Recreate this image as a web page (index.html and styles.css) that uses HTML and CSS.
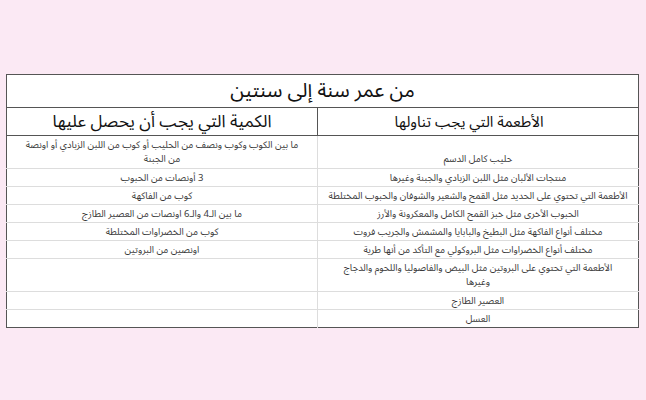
FILE: index.html
```html
<!DOCTYPE html>
<html lang="ar" dir="rtl">
<head>
<meta charset="utf-8">
<link rel="stylesheet" href="styles.css">
</head>
<body>
<table class="diet">
  <colgroup><col class="col-r"><col class="col-l"></colgroup>
  <tr class="title-row"><th colspan="2" class="title">من عمر سنة إلى سنتين</th></tr>
  <tr class="head-row">
    <th class="head head-right">الأطعمة التي يجب تناولها</th>
    <th class="head head-left">الكمية التي يجب أن يحصل عليها</th>
  </tr>
  <tr class="double"><td class="r">حليب كامل الدسم</td><td class="l">ما بين الكوب وكوب ونصف من الحليب أو كوب من اللبن الزبادي أو اونصة<br>من الجبنة</td></tr>
  <tr><td class="r">منتجات الألبان مثل اللبن الزبادي والجبنة وغيرها</td><td class="l">3 أونصات من الحبوب</td></tr>
  <tr><td class="r">الأطعمة التي تحتوي على الحديد مثل القمح والشعير والشوفان والحبوب المختلطة</td><td class="l">كوب من الفاكهة</td></tr>
  <tr><td class="r">الحبوب الأخرى مثل خبز القمح الكامل والمعكرونة والأرز</td><td class="l">ما بين الـ4 والـ6 اونصات من العصير الطازج</td></tr>
  <tr><td class="r">مختلف أنواع الفاكهة مثل البطيخ والبابايا والمشمش والجريب فروت</td><td class="l">كوب من الخضراوات المختلطة</td></tr>
  <tr><td class="r">مختلف أنواع الخضراوات مثل البروكولي مع التأكد من أنها طرية</td><td class="l">اونصين من البروتين</td></tr>
  <tr class="double"><td class="r">الأطعمة التي تحتوي على البروتين مثل البيض والفاصوليا واللحوم والدجاج<br>وغيرها</td><td class="l"></td></tr>
  <tr><td class="r">العصير الطازج</td><td class="l"></td></tr>
  <tr><td class="r">العسل</td><td class="l"></td></tr>
</table>
</body>
</html>
```

FILE: styles.css
```css
html, body {
  margin: 0;
  padding: 0;
  background: #fbe9f4;
}
body {
  padding: 74px 7px 0 7px;
  font-family: "Noto Sans Arabic", "DejaVu Sans", "Liberation Sans", sans-serif;
}
.diet {
  width: 632px;
  border-collapse: collapse;
  background: #ffffff;
  border: 1px solid #555555;
  table-layout: fixed;
}
.col-r {
  width: 321px;
}
.col-l {
  width: 311px;
}
.title {
  height: 32px;
  padding: 0;
  line-height: 20px;
  font-weight: normal;
  font-size: 20px;
  color: #111;
  border-bottom: 1px solid #555555;
  text-align: center;
  vertical-align: middle;
}
.head {
  height: 27px;
  padding: 0;
  line-height: 18px;
  font-weight: normal;
  color: #111;
  border-bottom: 1px solid #555555;
  text-align: center;
  vertical-align: middle;
}
.head-right {
  font-size: 15px;
  padding-right: 18px;
  border-left: 1px solid #555555;
}
.head-left {
  font-size: 17px;
}
td {
  padding: 2px 2px 1px;
  line-height: 14px;
  font-size: 9.5px;
  color: #3a3a3a;
  text-align: center;
  vertical-align: bottom;
  border-bottom: 1px solid #dddddd;
}
.double td {
  padding-bottom: 2px;
}
td.r {
  border-left: 1px solid #dddddd;
}
tr:last-child td {
  border-bottom: none;
}
```
